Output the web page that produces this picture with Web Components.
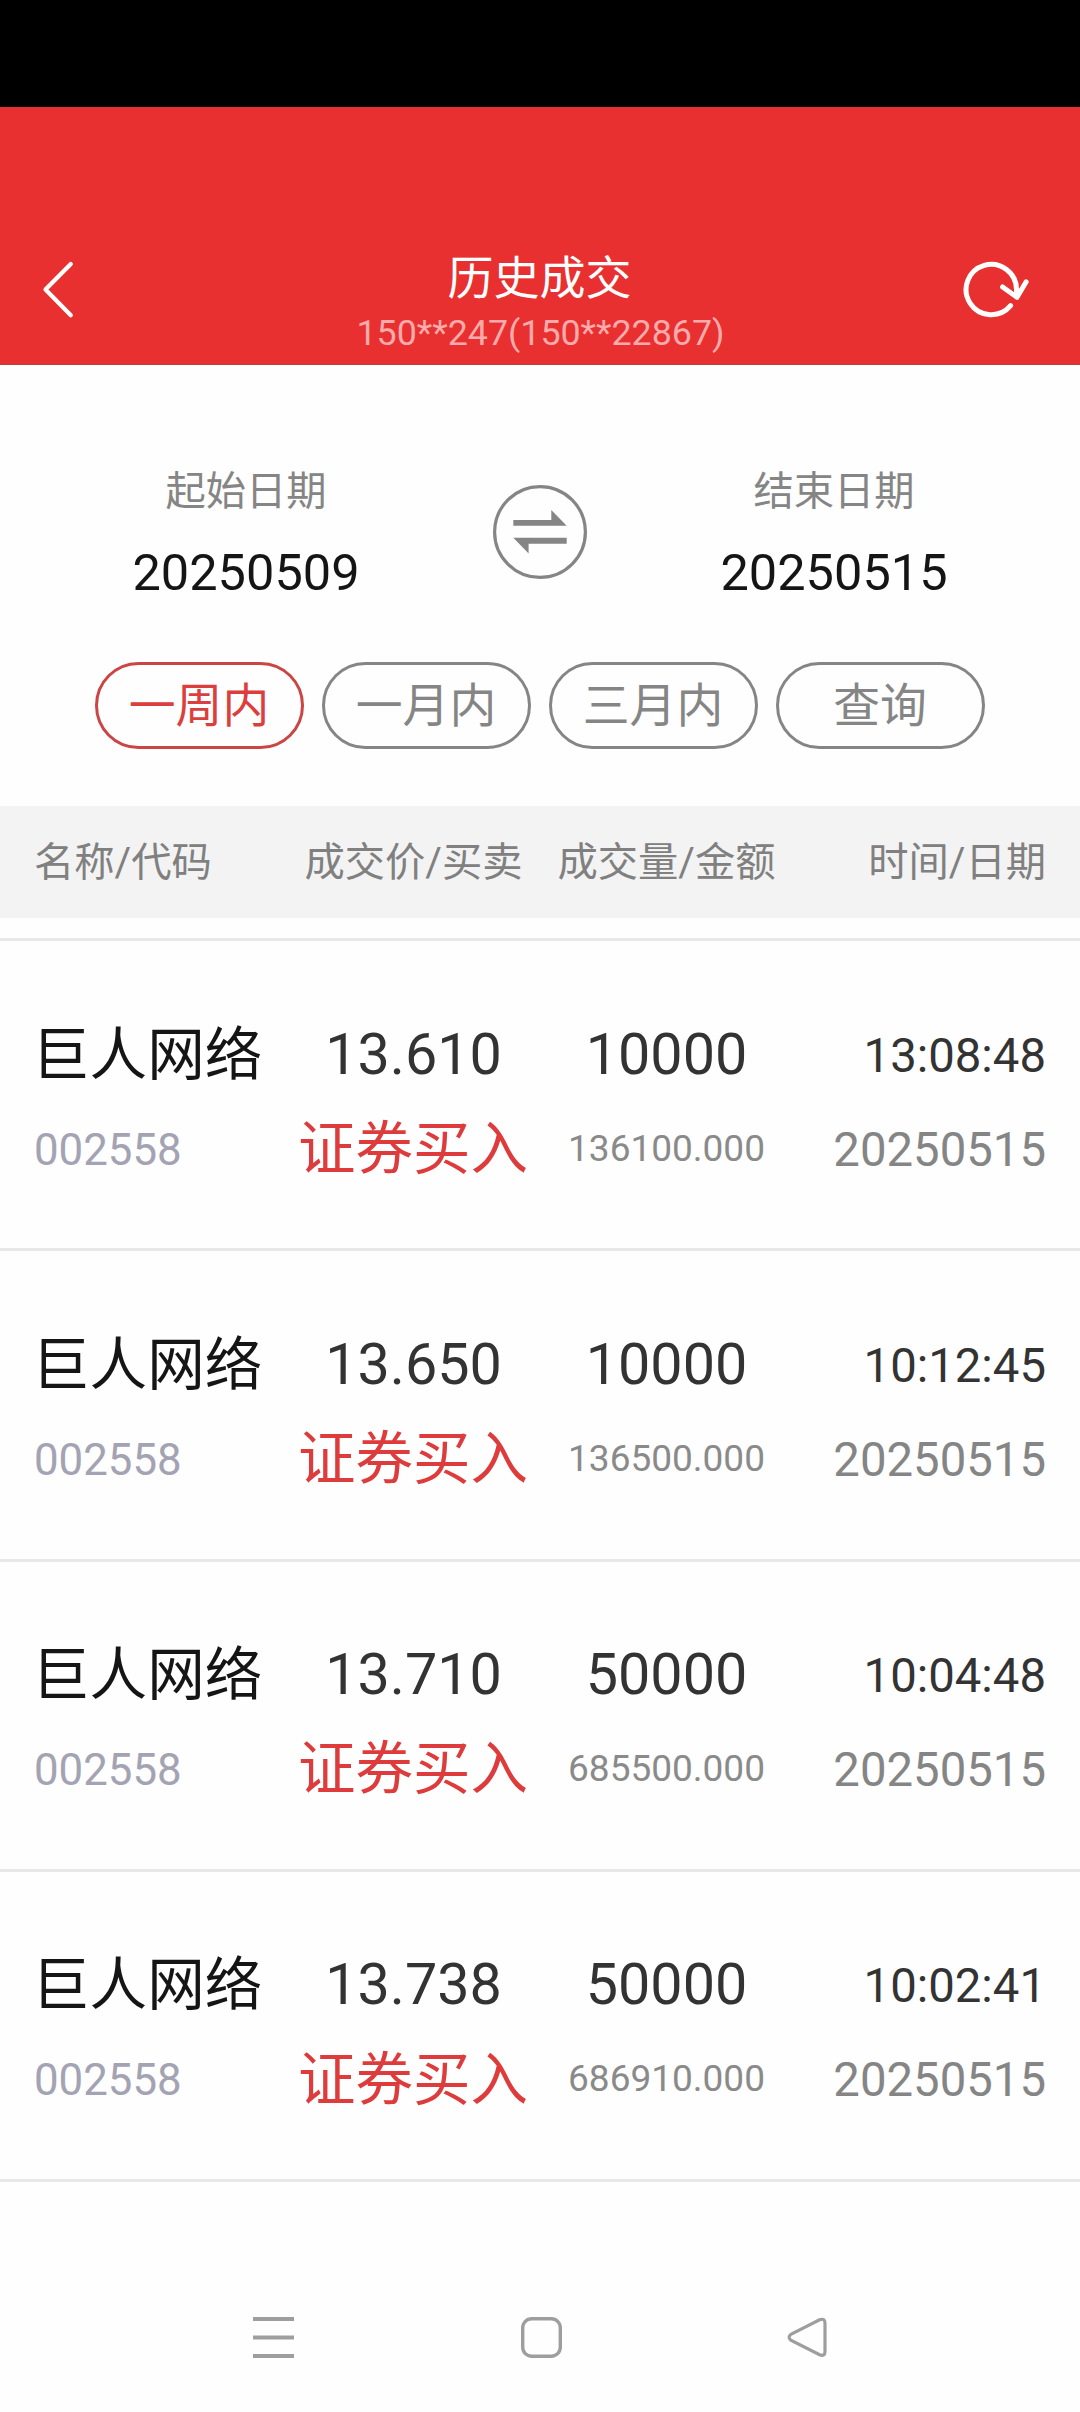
<!DOCTYPE html>
<html lang="zh-CN">
<head>
<meta charset="utf-8">
<title>历史成交</title>
<style>
html,body{margin:0;padding:0}
body{width:1080px;height:2412px;overflow:hidden;background:#fefefe;font-family:Roboto,"Noto Sans CJK SC",sans-serif;-webkit-font-smoothing:antialiased}
</style>
</head>
<body>
<trade-history></trade-history>
<script>
const define = (name, html) => customElements.define(name, class extends HTMLElement {
  constructor() {
    super();
    this.attachShadow({mode: 'open'});
  }
  connectedCallback() {
    if (this.shadowRoot.childNodes.length) return;
    const t = document.createElement('template');
    t.innerHTML = typeof html === 'function' ? html(this) : html;
    this.shadowRoot.append(t.content.cloneNode(true));
  }
});

define('app-header', `
<style>
:host{display:flex;flex-direction:column;height:365px;background:#e83030;box-sizing:border-box;border-bottom:1px solid #b5443f}
.status{height:107px;background:#000}
.bar{flex:1;display:grid;grid-template-columns:1fr auto 1fr;padding:141px 40px 0 40px}
.bar svg{display:block;margin-top:10px}
.refresh{justify-self:end}
.mid{text-align:center;display:flex;flex-direction:column}
.title{font-size:46px;line-height:60px;color:#fff;padding-right:1px}
.sub{font-size:35.8px;line-height:50px;color:#ffabab;padding-left:1px}
</style>
<div class="status"></div>
<div class="bar">
  <svg width="40" height="64" viewBox="40 258 40 64" fill="none" stroke="#fff" stroke-width="4.2" stroke-linecap="round" stroke-linejoin="round"><path d="M70.8 264L45.5 289.6L70.8 315.2"/></svg>
  <div class="mid"><span class="title"><slot name="title"></slot></span><span class="sub"><slot name="account"></slot></span></div>
  <svg class="refresh" width="80" height="64" viewBox="960 258 80 64" fill="none" stroke="#fff" stroke-width="5" stroke-linecap="round" stroke-linejoin="round"><path d="M1010.6 305.7A25.2 25.2 0 1 1 1016.5 289.7L1017 297.3M1002.6 287L1017 297.3L1026.2 281.8"/></svg>
</div>`);

define('date-field', `
<style>
:host{display:flex;flex-direction:column;align-items:center;width:300px}
.l{font-size:40.3px;line-height:60px;color:#858585;padding-top:1px}
.v{font-size:50.5px;line-height:60px;color:#151515;margin-top:21px}
</style><span class="l"><slot name="label"></slot></span><span class="v"><slot></slot></span>`);

define('range-pill', `
<style>
:host{display:flex;flex:1;height:87px;box-sizing:border-box;border:3px solid #858585;border-radius:44px;align-items:center;justify-content:center;font-size:46.8px;line-height:60px;color:#858585}
:host([active]){border-color:#cb4545;color:#dc3e3e}
span{padding:1px 1px 0 0}
</style><span><slot></slot></span>`);

define('date-filter', `
<style>
:host{display:block;height:441px;box-sizing:border-box;padding:96px 95px 0 95px}
.dates{display:flex;justify-content:space-between;padding:0 1px;height:201px}
.dates svg{display:block;margin-top:21px}
.pills{display:flex;gap:18px}
</style>
<div class="dates">
  <date-field><span slot="label">起始日期</span>20250509</date-field>
  <svg width="100" height="100" viewBox="490 482 100 100"><circle cx="540" cy="532" r="45.4" fill="none" stroke="#858585" stroke-width="3.2"/><path fill="#858585" d="M513.3 520H551.3V510L566.7 525.7H513.3ZM566.7 543.7H528.6V553.5L513.3 537.8H566.7Z"/></svg>
  <date-field><span slot="label">结束日期</span>20250515</date-field>
</div>
<div class="pills"><range-pill active>一周内</range-pill><range-pill>一月内</range-pill><range-pill>三月内</range-pill><range-pill>查询</range-pill></div>`);

const columns = 'grid-template-columns:253px 253px 253px 253px;padding:0 34px';

define('table-head', `
<style>
:host{display:grid;${columns};height:112px;background:#f3f3f3;align-items:center;color:#808080;font-size:40.3px;line-height:60px;margin-bottom:20px;white-space:nowrap}
span{padding-top:2px}
.c{text-align:center}
.r{text-align:right}
</style><span>名称/代码</span><span class="c">成交价/买卖</span><span class="c">成交量/金额</span><span class="r">时间/日期</span>`);

define('trade-row', el => {
  const a = n => el.getAttribute(n);
  return `
<style>
:host{display:grid;${columns};height:310.25px;box-sizing:border-box;border-top:3px solid #e8e8e8;white-space:nowrap}
div{display:flex;flex-direction:column;line-height:60px}
.name{padding-top:84.7px;gap:34px}
.deal{padding-top:83.7px;gap:35.3px;align-items:center}
.vol{padding-top:83.7px;gap:34px;align-items:center}
.when{padding-top:84.7px;gap:34px;align-items:flex-end}
.name b{font-size:57.6px;color:#151515;margin-left:-2px}
.name i{font-size:43.8px;color:#a3a3b3}
.big{font-size:57.5px;color:#333}
.side{font-size:57.5px;color:#de3c3c;padding-right:1px}
.amt{font-size:37px;color:#8a8a8a}
.time{font-size:47.3px;color:#333}
.date{font-size:47.3px;color:#858585}
b,i{font-weight:400;font-style:normal}
</style>
<div class="name"><b>${a('name')}</b><i>${a('code')}</i></div>
<div class="deal"><span class="big">${a('price')}</span><span class="side">${a('side')}</span></div>
<div class="vol"><span class="big">${a('volume')}</span><span class="amt">${a('amount')}</span></div>
<div class="when"><span class="time">${a('time')}</span><span class="date">${a('date')}</span></div>`;
});

define('system-nav', `
<style>
:host{display:flex;justify-content:space-between;padding:0 249px 0 251px;margin-top:133px}
svg{display:block}
</style>
<svg width="45" height="45" viewBox="251 2315 45 45" fill="#9e9e9e"><path d="M253 2317h41v4h-41zM253 2335.5h41v4h-41zM253 2354h41v4h-41z"/></svg>
<svg width="45" height="45" viewBox="519 2315 45 45" fill="none" stroke="#9e9e9e" stroke-width="3.4"><rect x="522.7" y="2318.7" width="37.6" height="37.6" rx="9"/></svg>
<svg width="45" height="45" viewBox="786 2315 45 45" fill="none" stroke="#9e9e9e" stroke-width="3.2"><path d="M790.8 2334.4L819.6 2319.8Q825 2317.8 825 2323.2V2351.4Q825 2356.8 819.6 2354.8L790.8 2340.2Q787.4 2337.3 790.8 2334.4Z"/></svg>`);

const trades = [
  ['13.610', '10000', '136100.000', '13:08:48'],
  ['13.650', '10000', '136500.000', '10:12:45'],
  ['13.710', '50000', '685500.000', '10:04:48'],
  ['13.738', '50000', '686910.000', '10:02:41']
];

define('trade-history', `
<style>
:host{display:block;width:1080px;height:2412px}
.rows{border-bottom:3px solid #e8e8e8}
</style>
<app-header><span slot="title">历史成交</span><span slot="account">150**247(150**22867)</span></app-header>
<date-filter></date-filter>
<table-head></table-head>
<div class="rows">${trades.map(([p, v, m, t]) => `<trade-row name="巨人网络" code="002558" price="${p}" side="证券买入" volume="${v}" amount="${m}" time="${t}" date="20250515"></trade-row>`).join('')}</div>
<system-nav></system-nav>`);
</script>
</body>
</html>
